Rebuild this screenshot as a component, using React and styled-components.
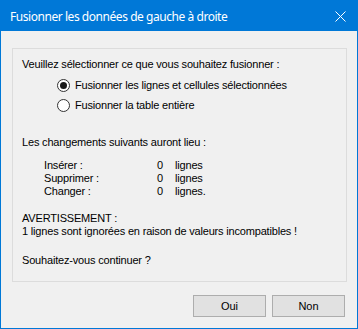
import React, { useState } from "react";
import styled, { createGlobalStyle } from "styled-components";

const GlobalStyle = createGlobalStyle`
  html, body {
    margin: 0;
    padding: 0;
    background: #f0f0f0;
  }
  * {
    box-sizing: border-box;
  }
`;

const Window = styled.div`
  width: 358px;
  height: 329px;
  border: 1px solid #0078d7;
  background: #f0f0f0;
  display: flex;
  flex-direction: column;
  font-family: "Liberation Sans", Arial, sans-serif;
  font-size: 11px;
  letter-spacing: -0.18px;
  color: #000;
`;

const TitleBar = styled.div`
  height: 30px;
  background: #0078d7;
  display: flex;
  align-items: center;
  justify-content: space-between;
  padding: 0 11px 0 9px;
  color: #fff;
  font-family: "Noto Sans", "Open Sans", sans-serif;
  font-size: 12px;
  letter-spacing: -0.45px;
`;

const Client = styled.div`
  flex: 1;
  display: flex;
  flex-direction: column;
  padding: 17px 10px 0 11px;
`;

const Panel = styled.div`
  height: 234px;
  border: 1px solid #dcdcdc;
  padding: 9px 9px 0 9px;
  display: flex;
  flex-direction: column;
`;

const Line = styled.div`
  line-height: 13px;
  height: 13px;
  white-space: nowrap;
  margin-top: ${(p) => p.$gap || 0}px;
`;

const RadioGroup = styled.div`
  display: flex;
  flex-direction: column;
  margin-top: 4px;
  padding-left: 35px;
`;

const RadioRow = styled.label`
  height: 20px;
  display: flex;
  align-items: center;
  gap: 5px;
  white-space: nowrap;
`;

const RadioCircle = styled.span`
  width: 13px;
  height: 13px;
  border-radius: 50%;
  border: 1px solid #333;
  background: #fff;
  display: flex;
  align-items: center;
  justify-content: center;
  &::after {
    content: "";
    width: 7px;
    height: 7px;
    border-radius: 50%;
    background: ${(p) => (p.$checked ? "#1a1a1a" : "transparent")};
  }
`;

const ChangeTable = styled.div`
  display: grid;
  grid-template-columns: 113px 18px auto;
  padding-left: 22px;
  margin-top: 10px;
  line-height: 13px;
`;

const Buttons = styled.div`
  display: flex;
  justify-content: flex-end;
  gap: 6px;
  margin-top: 13px;
  padding-right: 2px;
`;

const Button = styled.button`
  width: 73px;
  height: 22px;
  background: #e1e1e1;
  border: 1px solid #adadad;
  font-family: "Liberation Sans", Arial, sans-serif;
  font-size: 11px;
  color: #000;
  padding: 0;
`;

function CloseIcon() {
  return (
    <svg width="11" height="11" viewBox="0 0 11 11">
      <path d="M0.5 0.5 L10.5 10.5 M10.5 0.5 L0.5 10.5" stroke="#fff" strokeWidth="1" />
    </svg>
  );
}

const changes = [
  ["Insérer :", "0", "lignes"],
  ["Supprimer :", "0", "lignes"],
  ["Changer :", "0", "lignes."],
];

export default function App() {
  const [choice, setChoice] = useState(0);
  return (
    <>
      <GlobalStyle />
      <Window>
        <TitleBar>
          <span>Fusionner les données de gauche à droite</span>
          <CloseIcon />
        </TitleBar>
        <Client>
          <Panel>
            <Line>Veuillez sélectionner ce que vous souhaitez fusionner :</Line>
            <RadioGroup>
              {["Fusionner les lignes et cellules sélectionnées", "Fusionner la table entière"].map(
                (t, i) => (
                  <RadioRow key={t} onClick={() => setChoice(i)}>
                    <RadioCircle $checked={choice === i} />
                    {t}
                  </RadioRow>
                )
              )}
            </RadioGroup>
            <Line $gap={21}>Les changements suivants auront lieu :</Line>
            <ChangeTable>
              {changes.map(([a, b, c]) => (
                <React.Fragment key={a}>
                  <span>{a}</span>
                  <span>{b}</span>
                  <span>{c}</span>
                </React.Fragment>
              ))}
            </ChangeTable>
            <Line $gap={14}>AVERTISSEMENT :</Line>
            <Line>1 lignes sont ignorées en raison de valeurs incompatibles !</Line>
            <Line $gap={16}>Souhaitez-vous continuer ?</Line>
          </Panel>
          <Buttons>
            <Button>Oui</Button>
            <Button>Non</Button>
          </Buttons>
        </Client>
      </Window>
    </>
  );
}
